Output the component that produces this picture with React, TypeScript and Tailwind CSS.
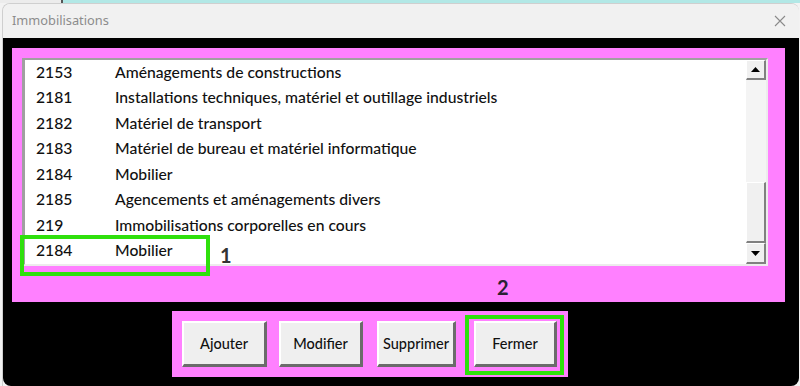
import React from 'react';

const rows = [
  ['2153', 'Aménagements de constructions'],
  ['2181', 'Installations techniques, matériel et outillage industriels'],
  ['2182', 'Matériel de transport'],
  ['2183', 'Matériel de bureau et matériel informatique'],
  ['2184', 'Mobilier'],
  ['2185', 'Agencements et aménagements divers'],
  ['219', 'Immobilisations corporelles en cours'],
  ['2184', 'Mobilier'],
];

const font = { fontFamily: 'Lato, "Open Sans", sans-serif' };

function ScrollButton({ up }: { up: boolean }) {
  return (
    <div className="h-full w-full flex items-center justify-center bg-[#f0f0f0] border-t border-l border-t-white border-l-white border-b-2 border-r-2 border-b-[#808080] border-r-[#808080]">
      <svg width="9" height="5" viewBox="0 0 9 5">
        {up ? <polygon points="0,5 9,5 4.5,0" fill="#000" /> : <polygon points="0,0 9,0 4.5,5" fill="#000" />}
      </svg>
    </div>
  );
}

function WinButton({ label, w, ml }: { label: string; w: string; ml: string }) {
  return (
    <div
      className={`${w} ${ml} h-[46px] flex items-center justify-center bg-[#efefef] border-t-2 border-l-2 border-t-white border-l-white border-b-[3px] border-r-[3px] border-b-[#6b6b6b] border-r-[#6b6b6b] text-[14.5px] font-medium text-[#111]`}
      style={font}
    >
      {label}
    </div>
  );
}

export default function App() {
  return (
    <div className="w-[800px] h-[386px] bg-[#f3f3f3] flex flex-col overflow-hidden">
      <div className="h-[3px] flex shrink-0">
        <div className="w-[63px] bg-[#ececec] border-r-2 border-[#555]" />
        <div className="flex-1 bg-[#b2e8e6]" />
      </div>
      <div className="ml-[2px] w-[797px] flex-1 flex flex-col rounded-t-[8px] border-l border-t border-[#cfcfcf] overflow-hidden">
        {/* title bar */}
        <div className="h-[34px] shrink-0 bg-[#f1f1f1] flex items-center justify-between pl-[9px] pr-[13px]">
          <span className="text-[12.8px] text-[#8c8c8c]" style={{ fontFamily: '"Noto Sans", "Open Sans", sans-serif' }}>
            Immobilisations
          </span>
          <svg width="12" height="12" viewBox="0 0 12 12">
            <path d="M1 1 L11 11 M11 1 L1 11" stroke="#8a8a8a" strokeWidth="1.1" fill="none" />
          </svg>
        </div>
        {/* content */}
        <div className="flex-1 bg-black rounded-b-[8px] pt-[10px] pl-[9px] flex flex-col">
          <div className="relative w-[773px] bg-[#ff80ff] pt-[10px] pl-[10px] pr-[17px] pb-[36px]">
            <div className="h-[208px] bg-white border-t-2 border-l-[3px] border-t-[#a0a0a0] border-l-[#a0a0a0] border-b-2 border-r-2 border-b-[#ececec] border-r-[#ececec] flex">
              <div className="flex-1 pl-[11px] text-[15.7px] font-medium text-[#111]" style={font}>
                {rows.map(([c, d], i) => (
                  <div key={i} className="h-[25.5px] flex items-center">
                    <span className="w-[79px]">{c}</span>
                    <span>{d}</span>
                  </div>
                ))}
              </div>
              <div className="w-[20px] flex flex-col">
                <div className="h-[20px]">
                  <ScrollButton up />
                </div>
                <div className="flex-1 bg-[#f4f4f4]" />
                <div className="h-[61px] bg-[#f0f0f0] border-t border-l border-t-white border-l-white border-b-2 border-r-2 border-b-[#808080] border-r-[#808080]" />
                <div className="h-[21px]">
                  <ScrollButton up={false} />
                </div>
              </div>
            </div>
            {/* annotations */}
            <div className="absolute left-[8px] top-[187px] w-[190px] h-[41px] border-4 border-[#2fe00c]" />
            <span className="absolute left-[208px] top-[192px] text-[20px] font-bold text-[#333]" style={font}>1</span>
            <span className="absolute left-[485px] top-[224px] text-[20px] font-bold text-[#2a2233]" style={font}>2</span>
          </div>
          <div className="relative mt-[9px] ml-[160px] w-[396px] h-[66px] bg-[#ff80ff] pt-[10px] flex">
            <WinButton label="Ajouter" w="w-[85px]" ml="ml-[10px]" />
            <WinButton label="Modifier" w="w-[84px]" ml="ml-[12px]" />
            <WinButton label="Supprimer" w="w-[79px]" ml="ml-[14px]" />
            <WinButton label="Fermer" w="w-[83px]" ml="ml-[18px]" />
            <div className="absolute left-[293px] top-[4px] w-[99px] h-[60px] border-4 border-[#2fe00c]" />
          </div>
        </div>
      </div>
    </div>
  );
}
